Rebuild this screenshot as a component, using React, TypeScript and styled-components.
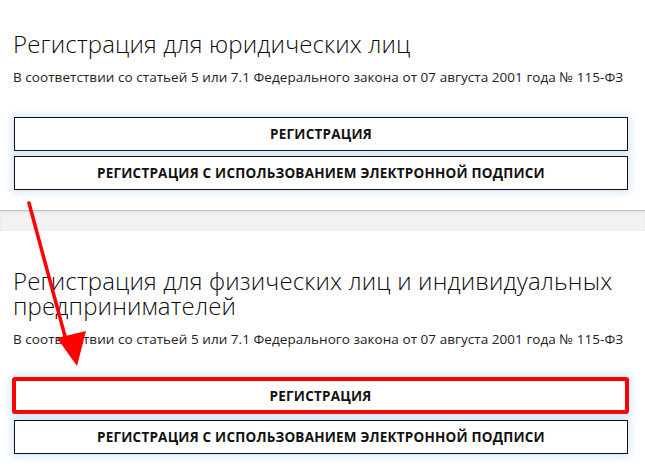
import React from "react";
import styled, { createGlobalStyle } from "styled-components";

const Global = createGlobalStyle`
  html, body { margin: 0; padding: 0; background: #ffffff; }
  body { font-family: "Open Sans", "Noto Sans", sans-serif; color: #111; }
  * { box-sizing: border-box; }
`;

const Page = styled.div`
  position: relative;
  width: 645px;
  height: 470px;
  overflow: hidden;
  display: flex;
  flex-direction: column;
`;

const Section = styled.section<{ $top: number; $bottom: number }>`
  background: #fff;
  padding: ${(p) => p.$top}px 17px ${(p) => p.$bottom}px 14px;
  display: flex;
  flex-direction: column;
`;

const Title = styled.h2`
  margin: 0 0 0 -1px;
  font-family: "Open Sans", sans-serif;
  font-weight: 300;
  font-size: 24px;
  line-height: 25px;
  letter-spacing: 0.15px;
  color: #0d0d0d;
`;

const Subtitle = styled.p`
  margin: 13px 0 0 -1px;
  font-family: "Open Sans", sans-serif;
  font-size: 13.5px;
  line-height: 16px;
  color: #222;
  letter-spacing: 0.05px;
  white-space: nowrap;
`;

const Buttons = styled.div<{ $mt: number }>`
  margin-top: ${(p) => p.$mt}px;
  display: flex;
  flex-direction: column;
  gap: 5px;
`;

const Button = styled.button<{ $highlight?: boolean }>`
  height: ${(p) => (p.$highlight ? 37 : 34)}px;
  margin: ${(p) => (p.$highlight ? "-3px -1px 1px -2px" : "0")};
  width: ${(p) => (p.$highlight ? "auto" : "100%")};
  background: #fff;
  border: ${(p) => (p.$highlight ? "4px solid #ff0000" : "1.5px solid #111")};
  border-radius: ${(p) => (p.$highlight ? "3px" : "0")};
  box-shadow: 0 0 8px 2px rgba(160, 200, 240, 0.45);
  font-family: "Open Sans", sans-serif;
  font-weight: 700;
  font-size: 13.5px;
  letter-spacing: 0.2px;
  color: #111;
  text-transform: uppercase;
  display: flex;
  align-items: center;
  justify-content: center;
  padding: 0;
  cursor: pointer;
`;

const Divider = styled.div`
  height: 24px;
  background: #f2f2f2;
  border-top: 1px solid #c4c4c4;
  box-shadow: inset 0 1px 2px rgba(0, 0, 0, 0.08);
`;

const Arrow = styled.svg`
  position: absolute;
  left: 0;
  top: 0;
  pointer-events: none;
`;

const subtitle =
  "В соответствии со статьей 5 или 7.1 Федерального закона от 07 августа 2001 года № 115-ФЗ";

export default function App() {
  return (
    <Page>
      <Global />
      <Section $top={31} $bottom={20}>
        <Title>Регистрация для юридических лиц</Title>
        <Subtitle>{subtitle}</Subtitle>
        <Buttons $mt={32}>
          <Button>Регистрация</Button>
          <Button>Регистрация с использованием электронной подписи</Button>
        </Buttons>
      </Section>
      <Divider />
      <Section $top={37} $bottom={16}>
        <Title>Регистрация для физических лиц и индивидуальных предпринимателей</Title>
        <Subtitle>{subtitle}</Subtitle>
        <Buttons $mt={33}>
          <Button $highlight>Регистрация</Button>
          <Button>Регистрация с использованием электронной подписи</Button>
        </Buttons>
      </Section>
      <Arrow width="645" height="470" viewBox="0 0 645 470">
        <line x1="29" y1="203" x2="66" y2="340" stroke="#ff0000" strokeWidth="3.5" strokeLinecap="round" />
        <polygon points="77,366 57,338 86,331" fill="#ff0000" />
      </Arrow>
    </Page>
  );
}
